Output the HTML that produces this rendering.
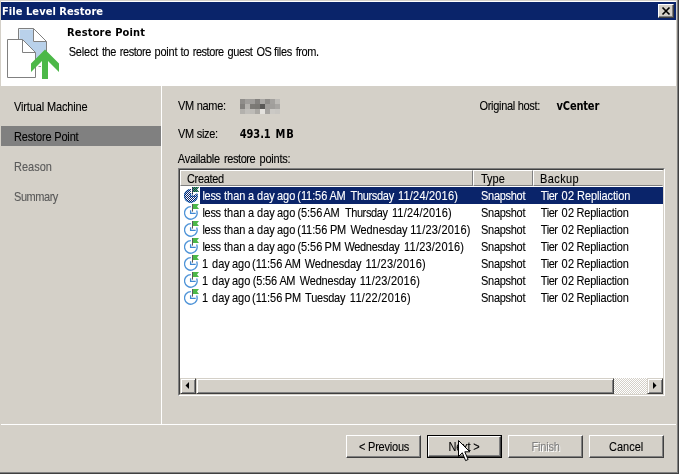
<!DOCTYPE html>
<html><head><meta charset="utf-8"><title>File Level Restore</title>
<style>
html,body{margin:0;padding:0;}
body{width:682px;height:474px;position:relative;overflow:hidden;background:#fff;font-family:"Liberation Sans",sans-serif;font-size:11px;color:#000;}
.abs,.t{position:absolute;}
.t{white-space:pre;line-height:13px;height:13px;}
.ph{position:absolute;left:0;top:0;}
.ms{transform:scaleY(1.14);transform-origin:0 10.3px;-webkit-text-stroke:0.1px;}
.b,.tb,.bb{font-weight:bold;}
.bb{font-family:"DejaVu Sans Condensed","DejaVu Sans","Liberation Sans",sans-serif;-webkit-text-stroke:0;}
.tb{font-family:"DejaVu Sans Condensed","DejaVu Sans","Liberation Sans",sans-serif;will-change:transform;}
#win{left:0;top:0;width:679px;height:474px;background:#d4d0c8;}
#title{left:1px;top:2px;width:675px;height:18px;background:#0a246a;}
#hdr{left:1px;top:20px;width:675px;height:66px;background:#fff;}
#sel{left:1px;top:126px;width:160px;height:20px;background:#808080;}
#vsep{left:161px;top:86px;width:1px;height:338px;background:#fff;}
#hsep{left:1px;top:424px;width:675px;height:1px;background:#fff;}
.btn{position:absolute;height:23px;width:75px;top:435px;box-sizing:border-box;background:#d4d0c8;border:1px solid;border-color:#fff #404040 #404040 #fff;box-shadow:inset -1px -1px 0 #808080;}
.sbtn{position:absolute;width:16px;height:16px;box-sizing:border-box;background:#d4d0c8;border:1px solid;border-color:#d4d0c8 #404040 #404040 #d4d0c8;box-shadow:inset 1px 1px 0 #fff, inset -1px -1px 0 #808080;}
.hc{position:absolute;top:170px;height:16px;box-sizing:border-box;background:#d4d0c8;border:1px solid;border-color:#fff #808080 #808080 #fff;}
</style></head><body>
<div id="win" class="abs"></div>
<div class="abs" style="left:1px;top:1px;width:675px;height:1px;background:#fff"></div>
<div class="abs" style="left:677px;top:0;width:1px;height:474px;background:#808080"></div>
<div class="abs" style="left:678px;top:0;width:1px;height:474px;background:#404040"></div>
<div class="abs" style="left:0;top:472px;width:678px;height:1px;background:#808080"></div>
<div class="abs" style="left:0;top:473px;width:679px;height:1px;background:#404040"></div>
<div id="title" class="abs"></div>
<div id="close" class="abs" style="left:658px;top:4px;width:16px;height:14px;box-sizing:border-box;background:#d4d0c8;border:1px solid;border-color:#fff #404040 #404040 #fff;box-shadow:inset -1px -1px 0 #808080;">
<svg width="14" height="12" style="position:absolute;left:0;top:0"><path d="M3.5 2.5 L10.5 9.5 M10.5 2.5 L3.5 9.5" stroke="#000" stroke-width="1.7" fill="none"/></svg></div>
<div id="hdr" class="abs"></div>
<svg id="bigicon" class="abs" style="left:0;top:20px" width="66" height="66" viewBox="0 20 66 66">
<path d="M18.5 28.5 H33.5 L46.5 41.5 V60 H18.5 Z" fill="#fff" stroke="#808080"/>
<path d="M19.5 29.5 H33 V42 H46 V60 H19.5 Z" fill="#b9d1ea"/>
<path d="M33.5 28.5 V41.5 H46.5" fill="none" stroke="#808080"/>
<path d="M7.5 39.5 H22.5 L35.5 52.5 V77.5 H7.5 Z" fill="#fff" stroke="#808080"/>
<path d="M22.5 39.5 V52.5 H35.5" fill="none" stroke="#808080"/>
<rect x="38.5" y="66" width="2.5" height="1" fill="#9a9a9a"/>
<path d="M45 49.5 L59 63.5 V72 L48 61 V79 H42 V61 L31 72 V63.5 Z" fill="#4cb848"/>
</svg>
<div id="sel" class="abs"></div>
<div id="vsep" class="abs"></div>
<div id="hsep" class="abs"></div>
<svg id="blur" class="abs" style="left:240px;top:99px" width="40" height="15"><rect x="0" y="0" width="5" height="5" fill="#8f8d8a"/><rect x="5" y="0" width="5" height="5" fill="#a09e9b"/><rect x="10" y="0" width="5" height="5" fill="#9e9c99"/><rect x="15" y="0" width="5" height="5" fill="#83817e"/><rect x="20" y="0" width="5" height="5" fill="#a9a7a4"/><rect x="25" y="0" width="5" height="5" fill="#8f8d8a"/><rect x="30" y="0" width="5" height="5" fill="#a3a19e"/><rect x="35" y="0" width="5" height="5" fill="#bdbbb7"/><rect x="0" y="5" width="5" height="5" fill="#83817e"/><rect x="5" y="5" width="5" height="5" fill="#b5b3af"/><rect x="10" y="5" width="5" height="5" fill="#7c7a76"/><rect x="15" y="5" width="5" height="5" fill="#7a7874"/><rect x="20" y="5" width="5" height="5" fill="#5a5957"/><rect x="25" y="5" width="5" height="5" fill="#a09e9b"/><rect x="30" y="5" width="5" height="5" fill="#a09e9b"/><rect x="35" y="5" width="5" height="5" fill="#a8a6a3"/><rect x="0" y="10" width="5" height="5" fill="#b3b1ad"/><rect x="5" y="10" width="5" height="5" fill="#c0beba"/><rect x="10" y="10" width="5" height="5" fill="#bdbbb7"/><rect x="15" y="10" width="5" height="5" fill="#a9a7a3"/><rect x="20" y="10" width="5" height="5" fill="#e4e2de"/><rect x="25" y="10" width="5" height="5" fill="#a5a3a0"/><rect x="30" y="10" width="5" height="5" fill="#cbc9c5"/><rect x="35" y="10" width="5" height="5" fill="#c8c6c2"/></svg>

<div id="list" class="abs" style="left:178px;top:168px;width:487px;height:228px;box-sizing:border-box;background:#fff;border:1px solid;border-color:#808080 #fff #fff #808080;"></div>
<div class="abs" style="left:179px;top:169px;width:485px;height:226px;box-sizing:border-box;border:1px solid;border-color:#404040 #d4d0c8 #d4d0c8 #404040;"></div>
<div class="hc" style="left:180px;width:293px"></div>
<div class="hc" style="left:473px;width:60px"></div>
<div class="hc" style="left:533px;width:130px;border-right-color:#d4d0c8"></div>
<div id="rowsel" class="abs" style="left:200px;top:187px;width:463px;height:17px;background:#0a246a"></div>
<svg class="abs" style="left:184px;top:187px" width="16" height="17" viewBox="0 0 16 17"><defs><pattern id="chk" width="2" height="2" patternUnits="userSpaceOnUse"><rect x="0" y="0" width="1" height="1" fill="#0a246a"/><rect x="1" y="1" width="1" height="1" fill="#0a246a"/></pattern><mask id="mk"><path d="M6.85 8.9 L6.9 2.0 A6.9 6.9 0 1 0 13.3 6.4 Z" fill="#fff"/><rect x="8" y="0" width="1" height="7.6" fill="#fff"/><path d="M9 0 H15 L13 2.5 L15 5 H9 Z" fill="#fff"/></mask></defs><path d="M6.85 8.9 L6.9 2.0 A6.9 6.9 0 1 0 13.3 6.4 Z" fill="#fff"/><path d="M6.9 2.6 A6.3 6.3 0 1 0 12.63 6.4" fill="none" stroke="#4f94d8" stroke-width="1.35"/><path d="M6.6 6.2 V9.4 H11.7" fill="none" stroke="#3f88d4" stroke-width="1.3"/><rect x="8" y="0" width="1" height="7.6" fill="#5a5a5a"/><path d="M9 0 H15 L13 2.5 L15 5 H9 Z" fill="#4cb848"/><rect x="0" y="0" width="16" height="17" fill="url(#chk)" mask="url(#mk)"/></svg><svg class="abs" style="left:184px;top:204px" width="16" height="17" viewBox="0 0 16 17"><path d="M6.9 2.6 A6.3 6.3 0 1 0 12.63 6.4" fill="none" stroke="#4f94d8" stroke-width="1.35"/><path d="M6.6 6.2 V9.4 H11.7" fill="none" stroke="#3f88d4" stroke-width="1.3"/><rect x="8" y="0" width="1" height="7.6" fill="#5a5a5a"/><path d="M9 0 H15 L13 2.5 L15 5 H9 Z" fill="#4cb848"/></svg><svg class="abs" style="left:184px;top:221px" width="16" height="17" viewBox="0 0 16 17"><path d="M6.9 2.6 A6.3 6.3 0 1 0 12.63 6.4" fill="none" stroke="#4f94d8" stroke-width="1.35"/><path d="M6.6 6.2 V9.4 H11.7" fill="none" stroke="#3f88d4" stroke-width="1.3"/><rect x="8" y="0" width="1" height="7.6" fill="#5a5a5a"/><path d="M9 0 H15 L13 2.5 L15 5 H9 Z" fill="#4cb848"/></svg><svg class="abs" style="left:184px;top:238px" width="16" height="17" viewBox="0 0 16 17"><path d="M6.9 2.6 A6.3 6.3 0 1 0 12.63 6.4" fill="none" stroke="#4f94d8" stroke-width="1.35"/><path d="M6.6 6.2 V9.4 H11.7" fill="none" stroke="#3f88d4" stroke-width="1.3"/><rect x="8" y="0" width="1" height="7.6" fill="#5a5a5a"/><path d="M9 0 H15 L13 2.5 L15 5 H9 Z" fill="#4cb848"/></svg><svg class="abs" style="left:184px;top:255px" width="16" height="17" viewBox="0 0 16 17"><path d="M6.9 2.6 A6.3 6.3 0 1 0 12.63 6.4" fill="none" stroke="#4f94d8" stroke-width="1.35"/><path d="M6.6 6.2 V9.4 H11.7" fill="none" stroke="#3f88d4" stroke-width="1.3"/><rect x="8" y="0" width="1" height="7.6" fill="#5a5a5a"/><path d="M9 0 H15 L13 2.5 L15 5 H9 Z" fill="#4cb848"/></svg><svg class="abs" style="left:184px;top:272px" width="16" height="17" viewBox="0 0 16 17"><path d="M6.9 2.6 A6.3 6.3 0 1 0 12.63 6.4" fill="none" stroke="#4f94d8" stroke-width="1.35"/><path d="M6.6 6.2 V9.4 H11.7" fill="none" stroke="#3f88d4" stroke-width="1.3"/><rect x="8" y="0" width="1" height="7.6" fill="#5a5a5a"/><path d="M9 0 H15 L13 2.5 L15 5 H9 Z" fill="#4cb848"/></svg><svg class="abs" style="left:184px;top:289px" width="16" height="17" viewBox="0 0 16 17"><path d="M6.9 2.6 A6.3 6.3 0 1 0 12.63 6.4" fill="none" stroke="#4f94d8" stroke-width="1.35"/><path d="M6.6 6.2 V9.4 H11.7" fill="none" stroke="#3f88d4" stroke-width="1.3"/><rect x="8" y="0" width="1" height="7.6" fill="#5a5a5a"/><path d="M9 0 H15 L13 2.5 L15 5 H9 Z" fill="#4cb848"/></svg>
<div class="abs" style="left:180px;top:378px;width:483px;height:16px;background-color:#fff;background-image:linear-gradient(45deg,#d4d0c8 25%,transparent 25%,transparent 75%,#d4d0c8 75%),linear-gradient(45deg,#d4d0c8 25%,transparent 25%,transparent 75%,#d4d0c8 75%);background-size:2px 2px;background-position:0 0,1px 1px"></div>
<div class="sbtn" style="left:180px;top:378px"><svg width="14" height="14" style="position:absolute;left:0;top:0"><path d="M8 3 V10 L4.5 6.5 Z" fill="#000"/></svg></div>
<div class="sbtn" style="left:196px;top:378px;width:418px"></div>
<div class="sbtn" style="left:647px;top:378px"><svg width="14" height="14" style="position:absolute;left:0;top:0"><path d="M5 3 V10 L8.5 6.5 Z" fill="#000"/></svg></div>

<div class="btn" id="b1" style="left:346px;"></div>
<div class="abs" style="left:427px;top:435px;width:75px;height:23px;background:#000"></div>
<div class="btn" id="b2" style="left:428px;top:436px;width:73px;height:21px"></div>
<div class="btn" id="b3" style="left:508px;"></div>
<div class="btn" id="b4" style="left:589px;"></div>
<div class="t tb" id="ttl" style="left:1.50px;top:4.7px;letter-spacing:0.059px;color:#fff">File Level Restore</div>
<div class="t tb" id="h1" style="left:67.00px;top:25.7px;letter-spacing:0.167px;">Restore Point</div>
<div class="t ms" id="s1" style="left:14.00px;top:100.7px;letter-spacing:-0.143px;">Virtual Machine</div>
<div class="t ms" id="s2" style="left:14.00px;top:130.7px;letter-spacing:-0.167px;">Restore Point</div>
<div class="t ms" id="s3" style="left:14.00px;top:160.7px;letter-spacing:0.000px;color:#5a5a5a">Reason</div>
<div class="t ms" id="s4" style="left:14.00px;top:190.7px;letter-spacing:-0.450px;color:#5a5a5a">Summary</div>
<div class="t ms" id="l1" style="left:178.00px;top:99.7px;letter-spacing:-0.286px;">VM name:</div>
<div class="t ms" id="l2" style="left:178.00px;top:127.7px;letter-spacing:-0.286px;">VM size:</div>
<div class="t ms" id="l3" style="left:479.50px;top:99.7px;letter-spacing:-0.308px;">Original host:</div>
<div class="t ms bb" id="v3" style="left:556.50px;top:99.7px;letter-spacing:-0.167px;">vCenter</div>
<div class="t ms" id="c1" style="left:187.00px;top:172.7px;letter-spacing:-0.333px;">Created</div>
<div class="t ms" id="c2" style="left:481.00px;top:172.7px;letter-spacing:0.000px;">Type</div>
<div class="t ms" id="c3" style="left:540.00px;top:172.7px;letter-spacing:0.400px;">Backup</div>
<div class="t ms" id="b1t" style="left:359.00px;top:440.7px;letter-spacing:-0.222px;">&lt; Previous</div>
<div class="t ms" id="b2t" style="left:448.50px;top:440.7px;letter-spacing:-0.200px;">Next &gt;</div>
<div class="t ms" id="b3t" style="left:531.50px;top:440.7px;letter-spacing:-0.200px;color:#808080;text-shadow:1px 1px 0 #fff">Finish</div>
<div class="t ms" id="b4t" style="left:609.00px;top:440.7px;letter-spacing:0.000px;">Cancel</div>
<div class="t ms" id="r0b" style="left:481.00px;top:189.7px;letter-spacing:-0.286px;color:#fff">Snapshot</div>
<div class="t ms" id="r1b" style="left:481.00px;top:206.7px;letter-spacing:-0.286px;">Snapshot</div>
<div class="t ms" id="r2b" style="left:481.00px;top:223.7px;letter-spacing:-0.286px;">Snapshot</div>
<div class="t ms" id="r3b" style="left:481.00px;top:240.7px;letter-spacing:-0.286px;">Snapshot</div>
<div class="t ms" id="r4b" style="left:481.00px;top:257.7px;letter-spacing:-0.286px;">Snapshot</div>
<div class="t ms" id="r5b" style="left:481.00px;top:274.7px;letter-spacing:-0.286px;">Snapshot</div>
<div class="t ms" id="r6b" style="left:481.00px;top:291.7px;letter-spacing:-0.286px;">Snapshot</div>
<div class="ph" id="h2"><span class="t ms" id="h2w0" style="left:68.70px;top:45.7px;letter-spacing:-0.200px;">Select </span><span class="t ms" id="h2w1" style="left:101.90px;top:45.7px;letter-spacing:-0.450px;">the </span><span class="t ms" id="h2w2" style="left:119.80px;top:45.7px;letter-spacing:-0.450px;">restore </span><span class="t ms" id="h2w3" style="left:154.60px;top:45.7px;letter-spacing:-0.250px;">point </span><span class="t ms" id="h2w4" style="left:180.60px;top:45.7px;letter-spacing:-0.450px;">to </span><span class="t ms" id="h2w5" style="left:192.70px;top:45.7px;letter-spacing:-0.450px;">restore </span><span class="t ms" id="h2w6" style="left:227.50px;top:45.7px;letter-spacing:-0.400px;">guest </span><span class="t ms" id="h2w7" style="left:256.40px;top:45.7px;letter-spacing:-0.450px;">OS </span><span class="t ms" id="h2w8" style="left:274.00px;top:45.7px;letter-spacing:-0.350px;">files </span><span class="t ms" id="h2w9" style="left:295.70px;top:45.7px;letter-spacing:-0.450px;">from.</span></div>
<div class="ph" id="v2"><span class="t ms bb" id="v2w0" style="left:239.80px;top:127.7px;letter-spacing:-0.100px;">493.1 </span><span class="t ms bb" id="v2w1" style="left:275.50px;top:127.7px;letter-spacing:1.000px;">MB</span></div>
<div class="ph" id="l4"><span class="t ms" id="l4w0" style="left:177.80px;top:152.7px;letter-spacing:-0.275px;">Available </span><span class="t ms" id="l4w1" style="left:224.10px;top:152.7px;letter-spacing:-0.450px;">restore </span><span class="t ms" id="l4w2" style="left:259.60px;top:152.7px;letter-spacing:-0.233px;">points:</span></div>
<div class="ph" id="r0a"><span class="t ms" id="r0aw0" style="left:202.50px;top:189.7px;letter-spacing:-0.333px;color:#fff">less </span><span class="t ms" id="r0aw1" style="left:224.00px;top:189.7px;letter-spacing:0.000px;color:#fff">than </span><span class="t ms" id="r0aw2" style="left:248.00px;top:189.7px;letter-spacing:0.000px;color:#fff">a </span><span class="t ms" id="r0aw3" style="left:257.00px;top:189.7px;letter-spacing:0.050px;color:#fff">day </span><span class="t ms" id="r0aw4" style="left:277.00px;top:189.7px;letter-spacing:0.000px;color:#fff">ago </span><span class="t ms" id="r0aw5" style="left:297.30px;top:189.7px;letter-spacing:-0.080px;color:#fff">(11:56 </span><span class="t ms" id="r0aw6" style="left:329.60px;top:189.7px;letter-spacing:-0.450px;color:#fff">AM </span><span class="t ms" id="r0aw7" style="left:350.50px;top:189.7px;letter-spacing:-0.314px;color:#fff">Thursday </span><span class="t ms" id="r0aw8" style="left:398.00px;top:189.7px;letter-spacing:0.200px;color:#fff">11/24/2016)</span></div>
<div class="ph" id="r0c"><span class="t ms" id="r0cw0" style="left:540.80px;top:189.7px;letter-spacing:-0.450px;color:#fff">Tier </span><span class="t ms" id="r0cw1" style="left:561.40px;top:189.7px;letter-spacing:0.400px;color:#fff">02 </span><span class="t ms" id="r0cw2" style="left:577.10px;top:189.7px;letter-spacing:-0.120px;color:#fff">Repliaction</span></div>
<div class="ph" id="r1a"><span class="t ms" id="r1aw0" style="left:202.50px;top:206.7px;letter-spacing:-0.333px;">less </span><span class="t ms" id="r1aw1" style="left:224.00px;top:206.7px;letter-spacing:0.000px;">than </span><span class="t ms" id="r1aw2" style="left:248.00px;top:206.7px;letter-spacing:0.000px;">a </span><span class="t ms" id="r1aw3" style="left:257.00px;top:206.7px;letter-spacing:0.050px;">day </span><span class="t ms" id="r1aw4" style="left:277.00px;top:206.7px;letter-spacing:0.000px;">ago </span><span class="t ms" id="r1aw5" style="left:297.40px;top:206.7px;letter-spacing:-0.050px;">(5:56 </span><span class="t ms" id="r1aw6" style="left:323.60px;top:206.7px;letter-spacing:-0.450px;">AM </span><span class="t ms" id="r1aw7" style="left:344.90px;top:206.7px;letter-spacing:-0.407px;">Thursday </span><span class="t ms" id="r1aw8" style="left:391.90px;top:206.7px;letter-spacing:0.180px;">11/24/2016)</span></div>
<div class="ph" id="r1c"><span class="t ms" id="r1cw0" style="left:540.80px;top:206.7px;letter-spacing:-0.450px;">Tier </span><span class="t ms" id="r1cw1" style="left:561.40px;top:206.7px;letter-spacing:0.400px;">02 </span><span class="t ms" id="r1cw2" style="left:576.60px;top:206.7px;letter-spacing:-0.220px;">Repliaction</span></div>
<div class="ph" id="r2a"><span class="t ms" id="r2aw0" style="left:202.50px;top:223.7px;letter-spacing:-0.333px;">less </span><span class="t ms" id="r2aw1" style="left:224.00px;top:223.7px;letter-spacing:0.000px;">than </span><span class="t ms" id="r2aw2" style="left:248.00px;top:223.7px;letter-spacing:0.000px;">a </span><span class="t ms" id="r2aw3" style="left:257.00px;top:223.7px;letter-spacing:0.050px;">day </span><span class="t ms" id="r2aw4" style="left:277.00px;top:223.7px;letter-spacing:0.000px;">ago </span><span class="t ms" id="r2aw5" style="left:297.30px;top:223.7px;letter-spacing:-0.080px;">(11:56 </span><span class="t ms" id="r2aw6" style="left:330.10px;top:223.7px;letter-spacing:-0.450px;">PM </span><span class="t ms" id="r2aw7" style="left:350.50px;top:223.7px;letter-spacing:-0.100px;">Wednesday </span><span class="t ms" id="r2aw8" style="left:410.30px;top:223.7px;letter-spacing:0.220px;">11/23/2016)</span></div>
<div class="ph" id="r2c"><span class="t ms" id="r2cw0" style="left:540.80px;top:223.7px;letter-spacing:-0.450px;">Tier </span><span class="t ms" id="r2cw1" style="left:561.40px;top:223.7px;letter-spacing:0.400px;">02 </span><span class="t ms" id="r2cw2" style="left:576.60px;top:223.7px;letter-spacing:-0.220px;">Repliaction</span></div>
<div class="ph" id="r3a"><span class="t ms" id="r3aw0" style="left:202.50px;top:240.7px;letter-spacing:-0.333px;">less </span><span class="t ms" id="r3aw1" style="left:224.00px;top:240.7px;letter-spacing:0.000px;">than </span><span class="t ms" id="r3aw2" style="left:248.00px;top:240.7px;letter-spacing:0.000px;">a </span><span class="t ms" id="r3aw3" style="left:257.00px;top:240.7px;letter-spacing:0.050px;">day </span><span class="t ms" id="r3aw4" style="left:277.00px;top:240.7px;letter-spacing:0.000px;">ago </span><span class="t ms" id="r3aw5" style="left:297.40px;top:240.7px;letter-spacing:-0.050px;">(5:56 </span><span class="t ms" id="r3aw6" style="left:324.60px;top:240.7px;letter-spacing:-0.050px;">PM </span><span class="t ms" id="r3aw7" style="left:344.40px;top:240.7px;letter-spacing:-0.325px;">Wednesday </span><span class="t ms" id="r3aw8" style="left:404.10px;top:240.7px;letter-spacing:0.200px;">11/23/2016)</span></div>
<div class="ph" id="r3c"><span class="t ms" id="r3cw0" style="left:540.80px;top:240.7px;letter-spacing:-0.450px;">Tier </span><span class="t ms" id="r3cw1" style="left:561.40px;top:240.7px;letter-spacing:0.400px;">02 </span><span class="t ms" id="r3cw2" style="left:576.60px;top:240.7px;letter-spacing:-0.220px;">Repliaction</span></div>
<div class="ph" id="r4a"><span class="t ms" id="r4aw0" style="left:201.90px;top:257.7px;letter-spacing:0.000px;">1 </span><span class="t ms" id="r4aw1" style="left:212.00px;top:257.7px;letter-spacing:0.050px;">day </span><span class="t ms" id="r4aw2" style="left:232.00px;top:257.7px;letter-spacing:0.000px;">ago </span><span class="t ms" id="r4aw3" style="left:252.10px;top:257.7px;letter-spacing:-0.040px;">(11:56 </span><span class="t ms" id="r4aw4" style="left:284.80px;top:257.7px;letter-spacing:-0.450px;">AM </span><span class="t ms" id="r4aw5" style="left:304.80px;top:257.7px;letter-spacing:-0.150px;">Wednesday </span><span class="t ms" id="r4aw6" style="left:365.40px;top:257.7px;letter-spacing:0.240px;">11/23/2016)</span></div>
<div class="ph" id="r4c"><span class="t ms" id="r4cw0" style="left:540.80px;top:257.7px;letter-spacing:-0.450px;">Tier </span><span class="t ms" id="r4cw1" style="left:561.40px;top:257.7px;letter-spacing:0.400px;">02 </span><span class="t ms" id="r4cw2" style="left:576.60px;top:257.7px;letter-spacing:-0.220px;">Repliaction</span></div>
<div class="ph" id="r5a"><span class="t ms" id="r5aw0" style="left:201.90px;top:274.7px;letter-spacing:0.000px;">1 </span><span class="t ms" id="r5aw1" style="left:212.00px;top:274.7px;letter-spacing:0.050px;">day </span><span class="t ms" id="r5aw2" style="left:232.00px;top:274.7px;letter-spacing:0.000px;">ago </span><span class="t ms" id="r5aw3" style="left:252.80px;top:274.7px;letter-spacing:-0.200px;">(5:56 </span><span class="t ms" id="r5aw4" style="left:279.40px;top:274.7px;letter-spacing:-0.450px;">AM </span><span class="t ms" id="r5aw5" style="left:299.80px;top:274.7px;letter-spacing:-0.200px;">Wednesday </span><span class="t ms" id="r5aw6" style="left:359.80px;top:274.7px;letter-spacing:0.220px;">11/23/2016)</span></div>
<div class="ph" id="r5c"><span class="t ms" id="r5cw0" style="left:540.80px;top:274.7px;letter-spacing:-0.450px;">Tier </span><span class="t ms" id="r5cw1" style="left:561.40px;top:274.7px;letter-spacing:0.400px;">02 </span><span class="t ms" id="r5cw2" style="left:576.60px;top:274.7px;letter-spacing:-0.220px;">Repliaction</span></div>
<div class="ph" id="r6a"><span class="t ms" id="r6aw0" style="left:201.90px;top:291.7px;letter-spacing:0.000px;">1 </span><span class="t ms" id="r6aw1" style="left:212.00px;top:291.7px;letter-spacing:0.050px;">day </span><span class="t ms" id="r6aw2" style="left:232.00px;top:291.7px;letter-spacing:0.000px;">ago </span><span class="t ms" id="r6aw3" style="left:252.10px;top:291.7px;letter-spacing:-0.040px;">(11:56 </span><span class="t ms" id="r6aw4" style="left:284.80px;top:291.7px;letter-spacing:-0.050px;">PM </span><span class="t ms" id="r6aw5" style="left:305.10px;top:291.7px;letter-spacing:-0.233px;">Tuesday </span><span class="t ms" id="r6aw6" style="left:349.80px;top:291.7px;letter-spacing:0.300px;">11/22/2016)</span></div>
<div class="ph" id="r6c"><span class="t ms" id="r6cw0" style="left:540.80px;top:291.7px;letter-spacing:-0.450px;">Tier </span><span class="t ms" id="r6cw1" style="left:561.40px;top:291.7px;letter-spacing:0.400px;">02 </span><span class="t ms" id="r6cw2" style="left:576.60px;top:291.7px;letter-spacing:-0.220px;">Repliaction</span></div>
<svg id="cursor" class="abs" style="left:457px;top:439px" width="14" height="23" viewBox="0 0 14 23"><path d="M1.5 1.5 V17.5 L5.3 13.8 L8.6 21.6 L11.1 20.5 L7.8 12.8 H12.8 Z" fill="#fff" stroke="#000" stroke-width="1"/></svg>
</body></html>
